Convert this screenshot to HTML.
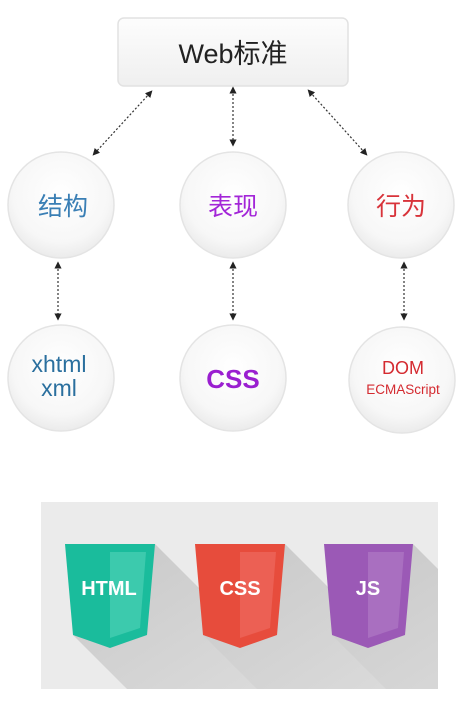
<!DOCTYPE html>
<html><head><meta charset="utf-8"><style>
html,body{margin:0;padding:0;background:#fff;width:466px;height:706px;overflow:hidden}
svg{display:block}
</style></head><body>
<svg width="466" height="706" viewBox="0 0 466 706" xmlns="http://www.w3.org/2000/svg">
<defs>
<radialGradient id="cg" cx="50%" cy="40%" r="60%">
<stop offset="0" stop-color="#ffffff"/><stop offset="0.75" stop-color="#f7f7f7"/><stop offset="1" stop-color="#ebebeb"/>
</radialGradient>
<linearGradient id="bg" x1="0" y1="0" x2="0" y2="1">
<stop offset="0" stop-color="#fdfdfd"/><stop offset="1" stop-color="#efefef"/>
</linearGradient>
<linearGradient id="sg" x1="0" y1="0" x2="1" y2="1">
<stop offset="0" stop-color="#c8c8c8"/><stop offset="1" stop-color="#dcdcdc"/>
</linearGradient>
<marker id="ah" markerWidth="6" markerHeight="6" refX="3" refY="3" orient="auto-start-reverse">
<path d="M0,0 L6,3 L0,6 z" fill="#222"/>
</marker>
</defs>
<rect x="118" y="18" width="230" height="68" rx="6" fill="url(#bg)" stroke="#e2e2e2" stroke-width="1.5"/>
<text x="233" y="63" text-anchor="middle" font-family="Liberation Sans, Noto Sans CJK SC, sans-serif" font-size="27" fill="#222">Web标准</text>
<g stroke="#333" stroke-width="1.2" stroke-dasharray="2,2" fill="none" marker-start="url(#ah)" marker-end="url(#ah)">
<line x1="150" y1="93" x2="95" y2="153"/>
<line x1="233" y1="90" x2="233" y2="143"/>
<line x1="310" y1="92" x2="365" y2="153"/>
<line x1="58" y1="265" x2="58" y2="317"/>
<line x1="233" y1="265" x2="233" y2="317"/>
<line x1="404" y1="265" x2="404" y2="317"/>
</g>
<g stroke="#e4e4e4" stroke-width="1.5" fill="url(#cg)">
<circle cx="61" cy="205" r="53"/><circle cx="233" cy="205" r="53"/><circle cx="401" cy="205" r="53"/>
<circle cx="61" cy="378" r="53"/><circle cx="233" cy="378" r="53"/><circle cx="402" cy="380" r="53"/>
</g>
<g font-family="Liberation Sans, Noto Sans CJK SC, sans-serif" text-anchor="middle">
<text x="63" y="215" font-size="25" fill="#3a7fb5">结构</text>
<text x="233" y="215" font-size="25" fill="#a326d8">表现</text>
<text x="401" y="215" font-size="25" fill="#d8333a">行为</text>
<text x="59" y="372" font-size="23" fill="#2a6f9e">xhtml</text>
<text x="59" y="396" font-size="23" fill="#2a6f9e">xml</text>
<text x="233" y="388" font-size="26" font-weight="bold" fill="#9a1fd0">CSS</text>
<text x="403" y="374" font-size="18" fill="#d42a30">DOM</text>
<text x="403" y="394" font-size="13.5" fill="#d42a30">ECMAScript</text>
</g>
<rect x="41" y="502" width="397" height="187" fill="#ebebeb"/>
<clipPath id="pc"><rect x="41" y="502" width="397" height="187"/></clipPath>
<g clip-path="url(#pc)" fill="url(#sg)">
<polygon points="155,544 300,689 127,689 73,635"/>
<polygon points="285,544 430,689 257,689 203,635"/>
<polygon points="413,544 558,689 386,689 332,635"/>
</g>
<g>
<polygon points="65,544 155,544 147,635 110,648 73,635" fill="#1abc9c"/>
<polygon points="110,552 146,552 140,628 110,638" fill="#3ccaad"/>
<polygon points="195,544 285,544 277,635 240,648 203,635" fill="#e74c3c"/>
<polygon points="240,552 276,552 270,628 240,638" fill="#ec6054"/>
<polygon points="324,544 413,544 405,635 368,648 332,635" fill="#9b59b6"/>
<polygon points="368,552 404,552 398,628 368,638" fill="#a96fc0"/>
</g>
<g font-family="Liberation Sans, sans-serif" font-weight="bold" fill="#fff" text-anchor="middle" font-size="20">
<text x="109" y="595">HTML</text>
<text x="240" y="595">CSS</text>
<text x="368" y="595">JS</text>
</g>
</svg>
</body></html>
